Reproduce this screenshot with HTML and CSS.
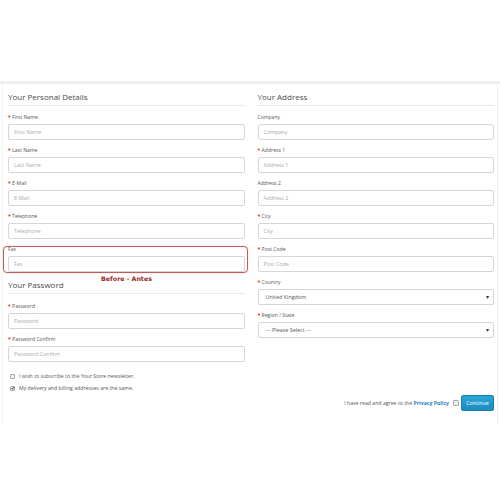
FILE: index.html
```html
<!DOCTYPE html>
<html>
<head>
<meta charset="utf-8">
<link rel="stylesheet" href="styles.css">
</head>
<body>
<div class="page">
  <div class="band"></div>
  <div class="panel">
    <div class="cols">
      <div class="col">
        <h2 class="legend">Your Personal Details</h2>
        <div class="field"><label class="req">First Name</label><div class="input">First Name</div></div>
        <div class="field"><label class="req">Last Name</label><div class="input">Last Name</div></div>
        <div class="field"><label class="req">E-Mail</label><div class="input">E-Mail</div></div>
        <div class="field"><label class="req">Telephone</label><div class="input">Telephone</div></div>
        <div class="field fax">
          <label>Fax</label><div class="input">Fax</div>
          <div class="highlight"></div>
          <div class="note">Before - Antes</div>
        </div>
        <h2 class="legend pw">Your Password</h2>
        <div class="field"><label class="req">Password</label><div class="input">Password</div></div>
        <div class="field"><label class="req">Password Confirm</label><div class="input">Password Confirm</div></div>
        <div class="checks">
          <div class="check"><span class="box"></span>I wish to subscribe to the Your Store newsletter.</div>
          <div class="check"><span class="box checked">&#10004;</span>My delivery and billing addresses are the same.</div>
        </div>
      </div>
      <div class="col">
        <h2 class="legend">Your Address</h2>
        <div class="field"><label>Company</label><div class="input">Company</div></div>
        <div class="field"><label class="req">Address 1</label><div class="input">Address 1</div></div>
        <div class="field"><label>Address 2</label><div class="input">Address 2</div></div>
        <div class="field"><label class="req">City</label><div class="input">City</div></div>
        <div class="field"><label class="req">Post Code</label><div class="input">Post Code</div></div>
        <div class="field"><label class="req">Country</label><div class="input select value">United Kingdom<span class="caret">&#9662;</span></div></div>
        <div class="field"><label class="req">Region / State</label><div class="input select value">--- Please Select ---<span class="caret">&#9662;</span></div></div>
      </div>
    </div>
    <div class="buttons">
      <span class="agree">I have read and agree to the <b class="link">Privacy Policy</b></span>
      <span class="box agree-box"></span>
      <span class="btn">Continue</span>
    </div>
  </div>
</div>
</body>
</html>
```
FILE: styles.css
```css
* { box-sizing: border-box; }
html, body { margin: 0; padding: 0; background: #fff; }
body { font-family: "Open Sans", "Liberation Sans", sans-serif; color: #666; width: 500px; height: 500px; overflow: hidden; }
.page { padding-top: 81px; }
.band { height: 3px; background: #f0f0f0; }
.panel { margin: 0 2px; border-left: 1px solid #f2f2f2; border-right: 1px solid #f2f2f2; padding: 0 3px 0 5px; height: 340px; }
.cols { display: flex; gap: 13px; }
.col { flex: 1; display: flex; flex-direction: column; }
.legend { margin: 7px 0 7px; font-size: 8px; font-weight: 400; color: #4a4a4a; line-height: 12px; padding-bottom: 2px; border-bottom: 1px solid #e8e8e8; }
.legend.pw { margin-top: 1px; margin-bottom: 8px; }
.field { position: relative; margin-bottom: 6px; }
.field label { display: block; font-size: 5.1px; line-height: 9px; color: #555; margin-bottom: 2px; }
.field label.req::before { content: "* "; color: #d33; font-weight: 700; }
.input { height: 16px; border: 1px solid #d6d6d6; border-radius: 2px; font-size: 5.4px; line-height: 14px; padding: 0 5px; color: #aaa; background: #fff; }
.input.value { color: #555; display: flex; justify-content: space-between; align-items: center; padding: 0 4px 0 7px; }
.caret { font-size: 6px; color: #333; }
.highlight { position: absolute; left: -5px; right: -3px; top: 1px; bottom: -1px; border: 1px solid #c2595b; border-radius: 4px; box-shadow: 0 0 1px #e6a5a6; pointer-events: none; }
.note { position: absolute; left: 93px; top: 30px; font-family: "DejaVu Sans", sans-serif; font-size: 6.3px; font-weight: 700; color: #9a1f1f; }
.checks { margin-top: 5px; display: flex; flex-direction: column; gap: 5px; }
.check { display: flex; align-items: center; font-size: 5.2px; line-height: 7px; color: #555; padding-left: 2px; }
.box { display: inline-flex; align-items: center; justify-content: center; width: 5px; height: 5px; border: 1px solid #aaa; border-radius: 1px; background: #f0f0f0; margin-right: 4px; font-size: 4.5px; color: #333; line-height: 1; }
.buttons { display: flex; justify-content: flex-end; align-items: center; margin-top: 3px; }
.agree { font-size: 5.2px; color: #555; }
.link { color: #1f82b9; font-weight: 700; }
.agree-box { margin: 0 0 0 4px; width: 6px; height: 6px; }
.btn { margin-left: 2px; width: 33px; height: 16px; border-radius: 2px; background: linear-gradient(#2aa6d6, #1b8cc0); border: 1px solid #1b7fb0; color: #fff; font-size: 5.3px; display: flex; align-items: center; justify-content: center; }
```
